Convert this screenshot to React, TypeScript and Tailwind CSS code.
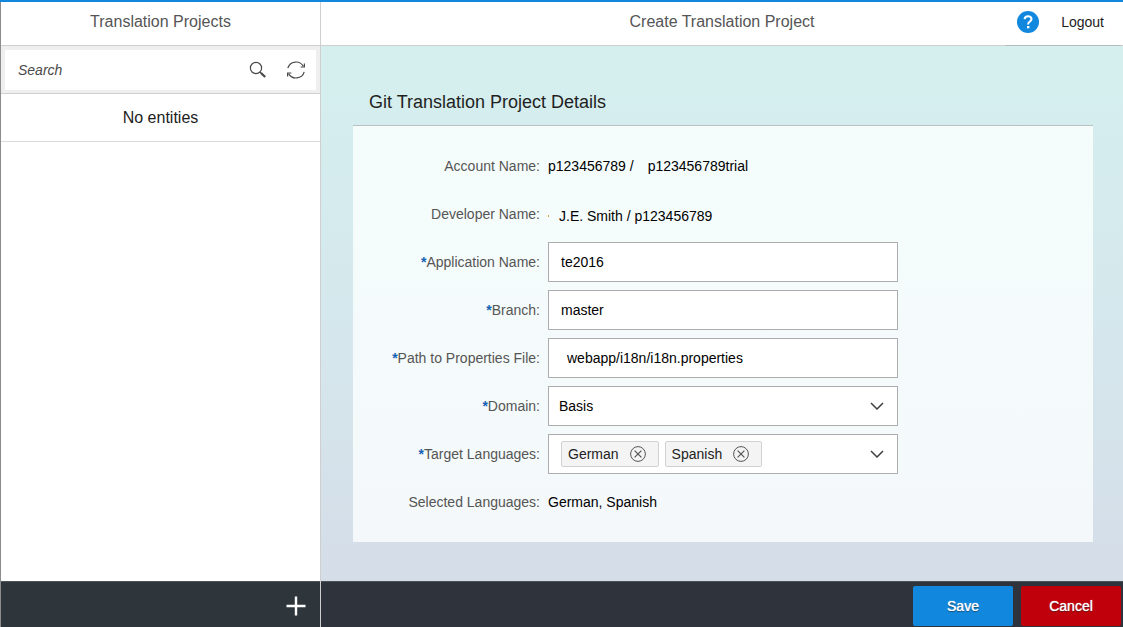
import { useState } from "react";
import type { ReactNode } from "react";

const controlClass =
  "h-10 w-full max-w-[350px] rounded-none border border-[#adadad] bg-white text-sm text-black outline-none focus:border-[#1188dd]";

const footerButtonClass =
  "h-10 w-[100px] rounded-xs text-sm text-white [text-shadow:0_0_1px_#fff,0_1px_1px_rgba(0,0,0,0.6)]";

function SearchIcon() {
  return (
    <svg width="18" height="18" viewBox="0 0 18 18" fill="none" stroke="#4a4a4a" aria-hidden="true">
      <circle cx="7" cy="7" r="5.6" strokeWidth="1.2" />
      <path d="M11 11l2 2" strokeWidth="1.3" />
      <path d="M12 12l4.2 4" strokeWidth="2.3" />
    </svg>
  );
}

function RefreshIcon() {
  return (
    <svg width="20" height="20" viewBox="0 0 20 20" fill="none" stroke="#4a4a4a" strokeWidth="1.2" aria-hidden="true">
      <path d="M1.8 8.2a8.5 8.5 0 0 1 15.6-1.8" />
      <path d="M18.4 3.4v3.6h-3.8" />
      <path d="M18.2 11.8a8.5 8.5 0 0 1-15.6 1.8" />
      <path d="M1.6 16.6v-3.6h3.8" />
    </svg>
  );
}

function HelpIcon() {
  return (
    <svg width="22" height="22" viewBox="0 0 22 22" fill="none" aria-hidden="true">
      <circle cx="11" cy="11" r="11" fill="#1188dd" />
      <path d="M7.6 8.2c.2-1.9 1.6-2.9 3.5-2.9 2 0 3.4 1.1 3.4 2.8 0 2.4-3.4 2.5-3.4 5.3" stroke="#fff" strokeWidth="2.1" />
      <rect x="10" y="15" width="2.4" height="2.3" fill="#fff" />
    </svg>
  );
}

function ChevronIcon() {
  return (
    <svg width="14" height="8" viewBox="0 0 14 8" fill="none" stroke="#3f3f3f" strokeWidth="1.5" aria-hidden="true">
      <path d="M1 1l6 6 6-6" />
    </svg>
  );
}

function RemoveIcon() {
  return (
    <svg width="16" height="16" viewBox="0 0 16 16" fill="none" stroke="#555" aria-hidden="true">
      <circle cx="8" cy="8" r="7.4" strokeWidth="1" />
      <path d="M4.6 4.6l6.8 6.8M11.4 4.6l-6.8 6.8" strokeWidth="1.2" />
    </svg>
  );
}

function Row({ label, htmlFor, required, children }: { label: string; htmlFor: string; required?: boolean; children: ReactNode }) {
  return (
    <div className="grid min-h-12 grid-cols-[187px_minmax(0,1fr)] items-center gap-x-2">
      <label htmlFor={htmlFor} className="text-right text-sm text-[#555]">
        {required && <span className="font-bold text-[#1462b4]">*</span>}
        {label}:
      </label>
      {children}
    </div>
  );
}

function Sidebar() {
  return (
    <aside className="flex w-[321px] shrink-0 flex-col border-x border-l-[#8c8c8c] border-r-[#cfcfcf] bg-white">
      <header className="flex h-11 items-center justify-center border-b border-[#cfcfcf] pb-1">
        <h1 className="text-base text-[#555]">Translation Projects</h1>
      </header>
      <div className="border-b border-[#cfcfcf] bg-[#efefef] p-1 pb-[3px]">
        <div className="flex h-10 items-center bg-white pr-[10px]">
          <input
            type="text"
            aria-label="Search"
            placeholder="Search"
            className="h-full min-w-0 flex-1 bg-transparent px-[13px] text-sm outline-none placeholder:italic placeholder:text-[#4a4a4a] placeholder:opacity-100"
          />
          <button type="button" aria-label="Search" className="mr-[19px]">
            <SearchIcon />
          </button>
          <button type="button" aria-label="Refresh">
            <RefreshIcon />
          </button>
        </div>
      </div>
      <p className="flex h-12 items-center justify-center border-b border-[#dcdcdc] text-base text-[#1c1c1c]">No entities</p>
      <footer className="mt-auto flex h-[46px] items-center justify-end border-t border-[#4a5458] bg-[#2e353b] pr-[14px] pt-[3px]">
        <button type="button" aria-label="Add project">
          <svg width="20" height="20" viewBox="0 0 20 20" stroke="#fff" strokeWidth="2.4" aria-hidden="true">
            <path d="M10 0.5v19M0.5 10h19" />
          </svg>
        </button>
      </footer>
    </aside>
  );
}

export default function App() {
  const [languages, setLanguages] = useState(["German", "Spanish"]);

  return (
    <div className="flex min-h-screen border-t-2 border-[#1188dd] bg-white font-['Liberation_Sans',Arial,sans-serif]">
      <Sidebar />
      <main className="flex min-w-0 flex-1 flex-col">
        <header className="grid h-11 grid-cols-[1fr_auto_1fr] bg-white">
          <div className="border-b border-[#cfcfcf]" />
          <h2 className="flex items-center border-b border-[#cfcfcf] pb-1 text-base text-[#555]">Create Translation Project</h2>
          <div className="flex justify-end border-b border-[#cfcfcf] pr-[2px]">
            <div className="-mb-px flex items-center gap-[22px] border-b border-[#b5babb] pb-[3px] pl-3 pr-[17px]">
              <button type="button" aria-label="Help">
                <HelpIcon />
              </button>
              <button type="button" className="text-sm text-[#1c1c1c]">Logout</button>
            </div>
          </div>
        </header>

        <form
          onSubmit={(event) => event.preventDefault()}
          className="flex flex-1 flex-col bg-linear-to-b from-[#d5efee] via-[#d5e8ed] to-[#d5dde8]"
        >
          <section className="mb-[38px] ml-8 mr-[30px] mt-10">
            <h3 className="flex h-10 items-center border-b border-[#b9c1c2] px-4 pb-2 text-lg text-[#1f1f1f]">
              Git Translation Project Details
            </h3>
            <div className="bg-linear-to-b from-[#f5fdfc] to-[#f4f8fa] py-4">
              <Row label="Account Name" htmlFor="account">
                <output id="account" className="flex gap-[14px] text-sm text-black">
                  <span>p123456789 /</span>
                  <span>p123456789trial</span>
                </output>
              </Row>
              <Row label="Developer Name" htmlFor="developer">
                <output id="developer" className="flex items-center gap-[10px] pt-1 text-sm text-black">
                  <span className="h-[2px] w-px bg-[#e0a030]" />
                  J.E. Smith / p123456789
                </output>
              </Row>
              <Row label="Application Name" htmlFor="application" required>
                <input id="application" type="text" defaultValue="te2016" className={`${controlClass} px-3`} />
              </Row>
              <Row label="Branch" htmlFor="branch" required>
                <input id="branch" type="text" defaultValue="master" className={`${controlClass} px-3`} />
              </Row>
              <Row label="Path to Properties File" htmlFor="path" required>
                <input id="path" type="text" defaultValue="webapp/i18n/i18n.properties" className={`${controlClass} px-[18px]`} />
              </Row>
              <Row label="Domain" htmlFor="domain" required>
                <div className="relative max-w-[350px]">
                  <select id="domain" defaultValue="Basis" className={`${controlClass} block appearance-none px-[10px]`}>
                    <option>Basis</option>
                  </select>
                  <span className="pointer-events-none absolute inset-y-0 right-[14px] flex items-center">
                    <ChevronIcon />
                  </span>
                </div>
              </Row>
              <Row label="Target Languages" htmlFor="languages" required>
                <div className={`${controlClass} flex items-center gap-[6px] pl-3 pr-[13px]`}>
                  {languages.map((language) => (
                    <span
                      key={language}
                      className="flex h-[26px] items-center gap-[11px] rounded-xs border border-[#d2d2d2] bg-[#f4f4f4] pl-[6px] pr-3 text-[#222]"
                    >
                      {language}
                      <button
                        type="button"
                        aria-label={`Remove ${language}`}
                        onClick={() => setLanguages(languages.filter((item) => item !== language))}
                      >
                        <RemoveIcon />
                      </button>
                    </span>
                  ))}
                  <input id="languages" type="text" className="min-w-0 flex-1 bg-transparent outline-none" />
                  <button type="button" aria-label="Show languages">
                    <ChevronIcon />
                  </button>
                </div>
              </Row>
              <Row label="Selected Languages" htmlFor="selected">
                <output id="selected" className="text-sm text-black">{languages.join(", ")}</output>
              </Row>
            </div>
          </section>
        </form>

        <footer className="flex h-[46px] items-end justify-end gap-2 border-t border-[#4a5458] bg-[#2f333b] pb-px pr-[2px]">
          <button type="button" className={`${footerButtonClass} bg-[#1188dd]`}>Save</button>
          <button type="button" className={`${footerButtonClass} bg-[#c0000a]`}>Cancel</button>
        </footer>
      </main>
    </div>
  );
}
